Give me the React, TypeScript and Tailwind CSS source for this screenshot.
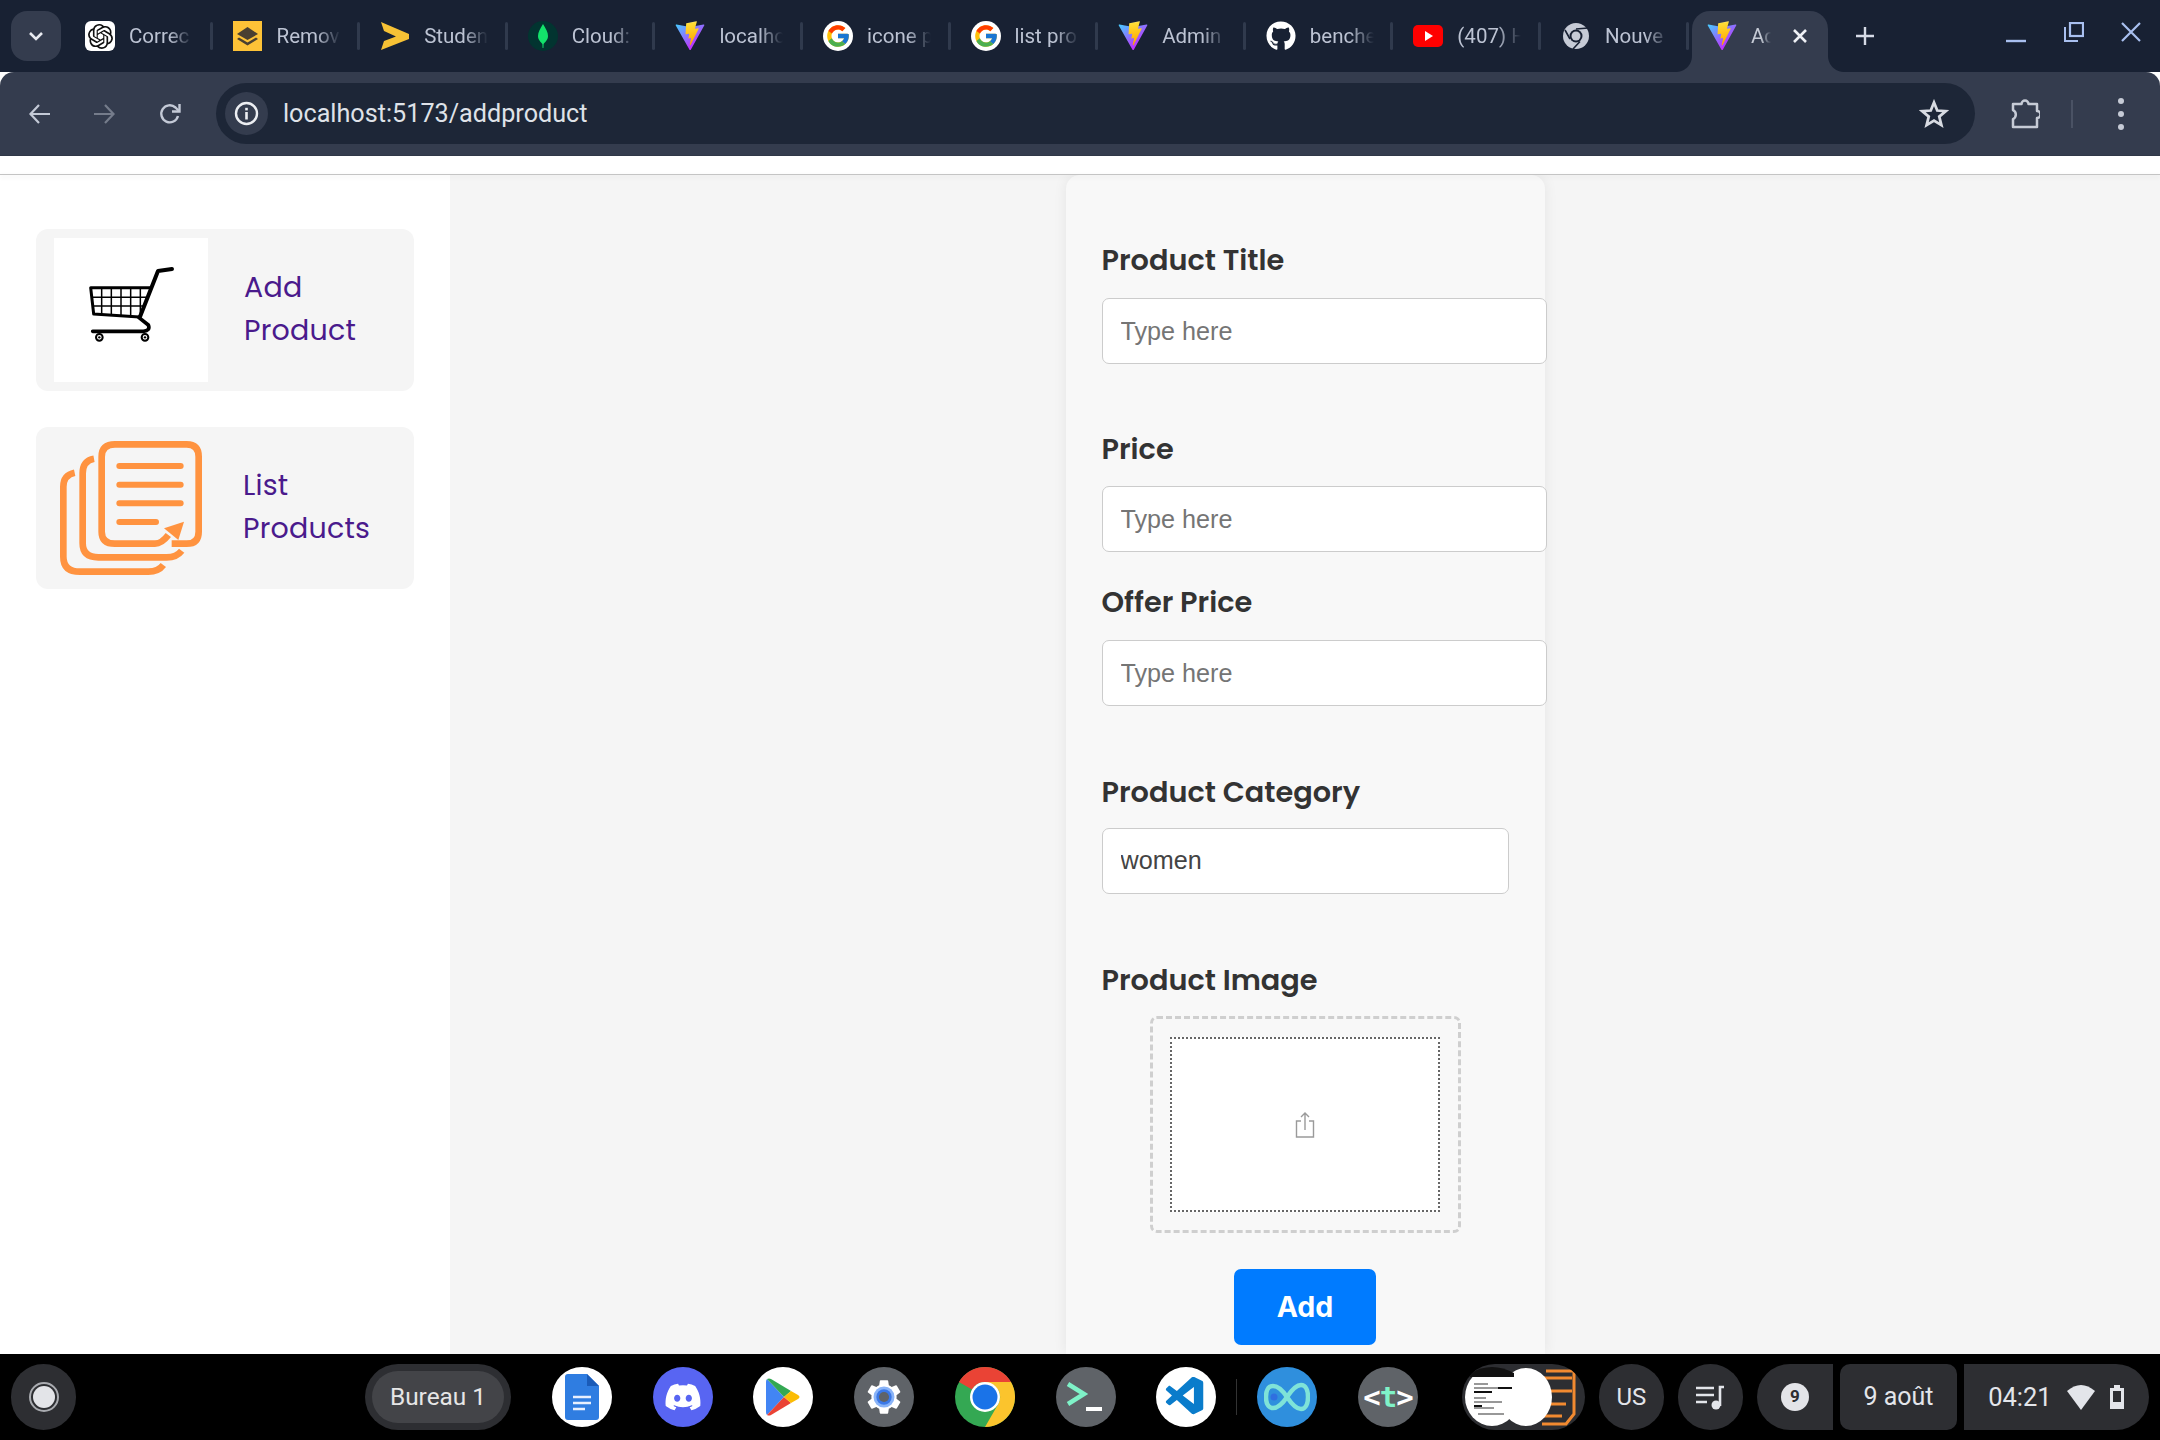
import React from "react";
import { SiOpenai } from "react-icons/si";
import { FaGithub, FaDiscord } from "react-icons/fa";
import { FcGoogle } from "react-icons/fc";
import { VscVscode } from "react-icons/vsc";

const Vite = () => (
  <svg width="30" height="30" viewBox="0 0 410 404">
    <defs>
      <linearGradient id="vt" x1="6" y1="33" x2="235" y2="344" gradientUnits="userSpaceOnUse">
        <stop stopColor="#41d1ff" />
        <stop offset="1" stopColor="#bd34fe" />
      </linearGradient>
      <linearGradient id="vb" x1="194.65" y1="8.8" x2="236.08" y2="292.99" gradientUnits="userSpaceOnUse">
        <stop stopColor="#ffea83" />
        <stop offset="0.083" stopColor="#ffdd35" />
        <stop offset="1" stopColor="#ffa800" />
      </linearGradient>
    </defs>
    <path d="M399.641 59.5246L215.643 388.545C211.844 395.338 202.084 395.378 198.228 388.618L10.5817 59.5563C6.38087 52.1896 12.6802 43.2665 21.0281 44.7586L205.223 77.6824C206.398 77.8924 207.601 77.8904 208.776 77.6763L389.119 44.8058C397.439 43.2894 403.768 52.1434 399.641 59.5246Z" fill="url(#vt)" />
    <path d="M292.965 1.5744L156.801 28.2552C154.563 28.6937 152.906 30.5903 152.771 32.8664L144.395 174.33C144.198 177.662 147.258 180.248 150.51 179.498L188.42 170.749C191.967 169.931 195.172 173.055 194.443 176.622L183.18 231.775C182.422 235.487 185.907 238.661 189.532 237.56L212.947 230.446C216.577 229.344 220.065 232.527 219.297 236.242L201.398 322.875C200.278 328.294 207.486 331.249 210.492 326.603L212.5 323.5L323.454 102.072C325.312 98.3645 322.108 94.137 318.036 94.9228L279.014 102.454C275.347 103.161 272.227 99.746 273.262 96.1583L298.731 7.86689C299.767 4.27314 296.636 0.855181 292.965 1.5744Z" fill="url(#vb)" />
  </svg>
);

const OpenAI = () => (
  <div className="flex h-[30px] w-[30px] items-center justify-center rounded-[6px] bg-white text-[#111]">
    <SiOpenai size={25} />
  </div>
);

const Layers = () => (
  <svg width="29" height="30" viewBox="0 0 29 30">
    <rect width="29" height="30" fill="#fdc237" />
    <path d="M14.5 6 L25 13 L14.5 19 L4 13 Z" fill="#4a4031" />
    <path d="M6 16.5 L14.5 21.5 L23 16.5 L25 18 L14.5 24.5 L4 18 Z" fill="#4a4031" />
  </svg>
);

const Chevron = () => (
  <svg width="30" height="30" viewBox="0 0 30 30">
    <path d="M1 1 L29 13 L29 18 L1 29 L4 20 L16 15.5 L4 10 Z" fill="#f7c235" />
  </svg>
);

const Mongo = () => (
  <div className="flex h-[30px] w-[30px] items-center justify-center rounded-full bg-[#023430]">
    <svg width="12" height="24" viewBox="0 0 12 24">
      <path d="M6 0 C9 5 11 8 11 12 C11 16 8 18 6.6 20 L6.4 24 L5.6 24 L5.4 20 C4 18 1 16 1 12 C1 8 3 5 6 0 Z" fill="#13e26b" />
    </svg>
  </div>
);

const Google = () => (
  <div className="flex h-[30px] w-[30px] items-center justify-center rounded-full bg-white">
    <FcGoogle size={26} />
  </div>
);

const Github = () => <FaGithub size={30} color="#fff" />;

const YouTube = () => (
  <svg width="30" height="22" viewBox="0 0 30 22">
    <rect width="30" height="22" rx="5" fill="#ff0000" />
    <path d="M12 6 L20 11 L12 16 Z" fill="#fff" />
  </svg>
);

const ChromeGrey = () => (
  <svg width="26" height="26" viewBox="0 0 26 26">
    <circle cx="13" cy="13" r="13" fill="#c6cbd6" />
    <circle cx="13" cy="13" r="6.5" fill="#182133" />
    <circle cx="13" cy="13" r="4.5" fill="#c6cbd6" />
    <path d="M13 6 L25 5 M7 16 L2 7 M17 18.5 L10 26" stroke="#182133" strokeWidth="1.6" />
  </svg>
);

const tabs: { icon: React.ReactNode; title: string }[] = [
  { icon: <OpenAI />, title: "Correc" },
  { icon: <Layers />, title: "Remov" },
  { icon: <Chevron />, title: "Studen" },
  { icon: <Mongo />, title: "Cloud:" },
  { icon: <Vite />, title: "localho" },
  { icon: <Google />, title: "icone p" },
  { icon: <Google />, title: "list pro" },
  { icon: <Vite />, title: "Admin" },
  { icon: <Github />, title: "benche" },
  { icon: <YouTube />, title: "(407) H" },
  { icon: <ChromeGrey />, title: "Nouve" },
];

function Tab({ icon, title }: { icon: React.ReactNode; title: string }) {
  return (
    <div className="flex h-[60px] w-[147.6px] shrink-0 items-center">
      <div className="ml-[21px] flex h-[32px] w-[30px] shrink-0 items-center justify-center">{icon}</div>
      <div className="ml-[14px] w-[76px] whitespace-nowrap text-[20.5px] text-[#bcc3d3] [mask-image:linear-gradient(to_right,black_40px,transparent_64px)]">
        {title}
      </div>
      <div className="ml-auto mr-[-1px] h-[28px] w-[3px] rounded-full bg-[#303a4d]" />
    </div>
  );
}

function TabStrip() {
  return (
    <div className="flex h-[72px] shrink-0 items-end bg-[#182133] pl-[11px]">
      <div className="mb-[11px] flex h-[50px] w-[50px] shrink-0 items-center justify-center rounded-[16px] bg-[#343c4e]">
        <svg width="16" height="10" viewBox="0 0 16 10">
          <path d="M2 2 L8 8 L14 2" fill="none" stroke="#e8eaf0" strokeWidth="2.6" />
        </svg>
      </div>
      <div className="flex h-[72px] w-[3px] shrink-0" />
      <div className="flex h-[72px] items-start pt-[6px]">
        {tabs.map((t, i) => (
          <Tab key={i} icon={t.icon} title={t.title} />
        ))}
      </div>
      <div className="relative ml-[4.4px] flex h-[61px] w-[136px] shrink-0 items-center rounded-t-[18px] bg-[#343c4e] pb-[11px]">
        <div className="absolute bottom-0 left-[-16px] h-[16px] w-[16px] bg-[radial-gradient(circle_at_0_0,#182133_15.5px,#343c4e_16.5px)]" />
        <div className="absolute bottom-0 right-[-16px] h-[16px] w-[16px] bg-[radial-gradient(circle_at_100%_0,#182133_15.5px,#343c4e_16.5px)]" />
        <div className="ml-[15px] flex h-[32px] w-[30px] shrink-0 items-center justify-center">
          <Vite />
        </div>
        <div className="ml-[14px] w-[22px] whitespace-nowrap text-[20.5px] text-[#c6cbd6] [mask-image:linear-gradient(to_right,black_10px,transparent_20px)]">
          Ac
        </div>
        <svg className="ml-[20px]" width="14" height="14" viewBox="0 0 14 14">
          <path d="M1 1 L13 13 M13 1 L1 13" stroke="#eef0f5" strokeWidth="2.6" />
        </svg>
      </div>
      <div className="flex h-[72px] flex-1 items-center">
        <svg className="ml-[27px]" width="20" height="20" viewBox="0 0 20 20">
          <path d="M10 1 V19 M1 10 H19" stroke="#d5dae6" strokeWidth="2.4" />
        </svg>
        <div className="ml-auto flex items-center pr-[18px]">
          <svg className="mr-[37px] mt-[10px]" width="22" height="10" viewBox="0 0 22 10">
            <path d="M1 5 H21" stroke="#a9c0f0" strokeWidth="2.4" />
          </svg>
          <svg className="mr-[36px] mb-[9px]" width="20" height="20" viewBox="0 0 20 20">
            <path d="M1 5 V19 H14" fill="none" stroke="#a9c0f0" strokeWidth="2" />
            <rect x="6" y="1" width="13" height="13" fill="none" stroke="#a9c0f0" strokeWidth="2.2" />
          </svg>
          <svg className="mb-[8px]" width="22" height="22" viewBox="0 0 22 22">
            <path d="M2 2 L20 20 M20 2 L2 20" stroke="#a9c0f0" strokeWidth="2.2" />
          </svg>
        </div>
      </div>
    </div>
  );
}

function Toolbar() {
  return (
    <div className="flex h-[84px] shrink-0 items-center rounded-t-[14px] border-b border-[#2f3747] bg-[#343c4e]">
      <svg className="ml-[28px]" width="24" height="24" viewBox="0 0 24 24">
        <path d="M22 12 H3 M11 3 L2.5 12 L11 21" fill="none" stroke="#c3c9d6" strokeWidth="2.2" />
      </svg>
      <svg className="ml-[40px]" width="24" height="24" viewBox="0 0 24 24">
        <path d="M2 12 H21 M13 3 L21.5 12 L13 21" fill="none" stroke="#757c8b" strokeWidth="2.2" />
      </svg>
      <svg className="ml-[42px]" width="24" height="24" viewBox="0 0 24 24">
        <path d="M20 14 A8.5 8.5 0 1 1 17.5 5.5 L21 9" fill="none" stroke="#c3c9d6" strokeWidth="2.4" />
        <path d="M21.5 2 V9.5 H14" fill="none" stroke="#c3c9d6" strokeWidth="2.4" />
      </svg>
      <div className="ml-[34px] flex h-[61px] w-[1759px] shrink-0 items-center rounded-full bg-[#1d2637] pl-[9px]">
        <div className="flex h-[43px] w-[43px] items-center justify-center rounded-full bg-[#343c4e]">
          <svg width="25" height="25" viewBox="0 0 25 25">
            <circle cx="12.5" cy="12.5" r="10.5" fill="none" stroke="#eceef2" strokeWidth="2.4" />
            <rect x="11.2" y="11" width="2.6" height="7.5" fill="#eceef2" />
            <rect x="11.2" y="6.8" width="2.6" height="2.6" fill="#eceef2" />
          </svg>
        </div>
        <span className="ml-[15px] font-['Roboto',sans-serif] text-[25.2px] text-[#dfe2e8]">localhost:5173/addproduct</span>
        <svg className="ml-auto mr-[26px]" width="30" height="30" viewBox="0 0 24 24">
          <path d="M12 2.8 L14.6 9.2 L21.5 9.7 L16.2 14.1 L17.9 20.9 L12 17.2 L6.1 20.9 L7.8 14.1 L2.5 9.7 L9.4 9.2 Z" fill="none" stroke="#d8dbe2" strokeWidth="2.2" />
        </svg>
      </div>
      <svg className="ml-[35px]" width="30" height="32" viewBox="0 0 30 32">
        <path d="M3 6 H11.5 A3.5 3.5 0 0 1 18.5 6 H27 V13 A3.5 3.5 0 0 1 27 20 V29 H3 V21 A5 5 0 0 0 3 12 Z" fill="none" stroke="#c6cbd6" strokeWidth="2.5" strokeLinejoin="round" />
      </svg>
      <div className="ml-[31px] h-[28px] w-[2px] bg-[#4a5264]" />
      <div className="ml-[45px] flex flex-col gap-[7px]">
        <div className="h-[6px] w-[6px] rounded-full bg-[#c6cbd6]" />
        <div className="h-[6px] w-[6px] rounded-full bg-[#c6cbd6]" />
        <div className="h-[6px] w-[6px] rounded-full bg-[#c6cbd6]" />
      </div>
    </div>
  );
}

const Cart = () => (
  <svg width="154" height="144" viewBox="162 114 462 432">
    <g fill="none" stroke="#000" strokeLinejoin="round" strokeLinecap="round">
      <path d="M516 207 L474 213 L420 350" strokeWidth="12" />
      <path d="M450 263 L272 263 L281 342 L418 351" strokeWidth="9" />
      <path d="M305 265 V344 M334 265 V346 M363 265 V348 M392 265 V350 M421 265 V340 M276 292 H440 M279 318 H430" strokeWidth="4.5" />
      <path d="M416 352 L445 375 Q452 392 430 394 L278 394" strokeWidth="11" />
      <circle cx="298" cy="412" r="10" strokeWidth="6" />
      <circle cx="435" cy="412" r="10" strokeWidth="6" />
    </g>
    <circle cx="298" cy="412" r="3.5" fill="#000" />
    <circle cx="435" cy="412" r="3.5" fill="#000" />
  </svg>
);

const ListIcon = () => (
  <svg width="154" height="144" viewBox="162 708 462 432">
    <g fill="none" stroke="#ff9340" strokeLinecap="butt" strokeWidth="20">
      <path d="M515 1031 L560 1031 Q596 1031 596 995 L596 770 Q596 733 560 733 L345 733 Q305 733 305 770 L305 995 Q305 1031 345 1031 L465 1031 Q485 1031 505 1005" />
      <path d="M282 776 Q248 782 248 820 L248 1030 Q248 1072 295 1072 L500 1072 Q530 1072 545 1052" />
      <path d="M224 818 Q190 825 190 860 L190 1070 Q190 1115 240 1115 L445 1115 Q475 1115 490 1095" />
    </g>
    <g stroke="#ff9340" strokeLinecap="round" strokeWidth="18">
      <path d="M358 798 H542 M358 854 H542 M358 910 H542 M358 966 H468" />
    </g>
    <path d="M552 965 L535 1020 L492 985 Z" fill="#ff9340" />
  </svg>
);

function SideItem({ icon, first, second, ml }: { icon: React.ReactNode; first: string; second: string; ml: string }) {
  return (
    <div className="flex h-[162px] w-[378px] items-center rounded-[12px] bg-[#f5f5f5] pl-[18px]">
      <div className="shrink-0">{icon}</div>
      <div className={`${ml} pb-[2px] font-['Poppins','Inter',sans-serif] text-[28.5px] leading-[43px] tracking-[0.2px] text-[#4a1a8c]`}>
        <div>{first}</div>
        <div>{second}</div>
      </div>
    </div>
  );
}

function Sidebar() {
  return (
    <div className="flex h-full w-[450px] shrink-0 flex-col gap-[36px] bg-white pl-[36px] pt-[54px]">
      <SideItem icon={<div className="bg-white"><Cart /></div>} first="Add" second="Product" ml="ml-[36px]" />
      <SideItem icon={<ListIcon />} first="List" second="Products" ml="ml-[35px]" />
    </div>
  );
}

const labelCls = "block font-['Poppins','Inter',sans-serif] text-[28.75px] font-semibold leading-[40px] text-[#333]";
const inputCls =
  "block h-[66px] rounded-[7px] border border-[#ccc] bg-white pl-[18px] font-['Liberation_Sans',sans-serif] text-[25.2px] text-[#444] outline-none placeholder:text-[#757575]";

function Field({ label, top, gap }: { label: string; top: string; gap: string }) {
  return (
    <div className={top}>
      <label className={labelCls}>{label}</label>
      <input className={`${inputCls} ${gap} w-[445px]`} placeholder="Type here" />
    </div>
  );
}

function FormCard() {
  return (
    <div className="h-full w-[479px] rounded-t-[14px] bg-[#f8f8f8] px-[36px] pt-[65px] shadow-[0_0_14px_rgba(0,0,0,0.07)]">
      <Field label="Product Title" top="" gap="mt-[18px]" />
      <Field label="Price" top="mt-[65px]" gap="mt-[17px]" />
      <Field label="Offer Price" top="mt-[30px]" gap="mt-[18px]" />
      <div className="mt-[66px]">
        <label className={labelCls}>Product Category</label>
        <select className={`${inputCls} mt-[16px] w-[407px] appearance-none`} defaultValue="women">
          <option value="women">women</option>
          <option value="men">men</option>
          <option value="kids">kids</option>
        </select>
      </div>
      <div className="mt-[66px]">
        <label className={labelCls}>Product Image</label>
        <div className="mx-auto mt-[16px] flex h-[217px] w-[311px] items-center justify-center rounded-[7px] border-[3px] border-dashed border-[#cfcfcf]">
          <div className="flex h-[175px] w-[270px] items-center justify-center border-2 border-dotted border-[#666] bg-white">
            <svg width="20" height="26" viewBox="0 0 20 26">
              <path d="M6 9 H1.5 V25 H18.5 V9 H14 M10 18 V1.5 M6 5 L10 1 L14 5" fill="none" stroke="#9a9a9a" strokeWidth="1.4" />
            </svg>
          </div>
        </div>
        <button className="mx-auto mt-[36px] block h-[76px] w-[142px] rounded-[7px] bg-[#007bff] font-['Inter',sans-serif] text-[28.5px] font-bold text-white">
          Add
        </button>
      </div>
    </div>
  );
}

function DockIcon({ children, mark }: { children: React.ReactNode; mark?: "small" | "wide" }) {
  return (
    <div className="relative flex h-[60px] w-[100.75px] shrink-0 items-center justify-center">
      {children}
      {mark === "small" && <div className="absolute bottom-[-20px] h-[2px] w-[12px] bg-[#c3cfe2]" />}
      {mark === "wide" && <div className="absolute bottom-[-20px] h-[2px] w-[24px] bg-[#e3e8f2]" />}
    </div>
  );
}

const Circle = ({ bg, children }: { bg: string; children: React.ReactNode }) => (
  <div className={`flex h-[60px] w-[60px] items-center justify-center rounded-full ${bg}`}>{children}</div>
);

const ChromeLogo = () => (
  <svg width="60" height="60" viewBox="0 0 60 60">
    <circle cx="30" cy="30" r="30" fill="#34a853" />
    <path d="M30 0 A30 30 0 0 1 56 15 L30 15 A15 15 0 0 0 17 22.5 L4 15 A30 30 0 0 1 30 0 Z" fill="#ea4335" />
    <path d="M56 15 A30 30 0 0 1 30 60 L43 37.5 A15 15 0 0 0 43 22.5 L30 15 Z" fill="#fbc42d" />
    <circle cx="30" cy="30" r="15" fill="#fff" />
    <circle cx="30" cy="30" r="12.5" fill="#1a73e8" />
  </svg>
);

const PlayLogo = () => (
  <svg width="34" height="38" viewBox="0 0 34 38">
    <path d="M1 1 L18 19 L1 37 Q0 36 0 34 V4 Q0 2 1 1 Z" fill="#4285f4" />
    <path d="M1 1 Q3 0 5 1 L25 13 L18 19 Z" fill="#34a853" />
    <path d="M1 37 Q3 38 5 37 L25 25 L18 19 Z" fill="#ea4335" />
    <path d="M25 13 L32 17 Q35 19 32 21 L25 25 L18 19 Z" fill="#fbbc04" />
  </svg>
);

const DocsLogo = () => (
  <svg width="34" height="46" viewBox="0 0 34 46">
    <path d="M3 0 H22 L34 12 V43 Q34 46 31 46 H3 Q0 46 0 43 V3 Q0 0 3 0 Z" fill="#2f7de1" />
    <path d="M22 0 L34 12 H22 Z" fill="#1a5bb8" />
    <path d="M8 23 H26 M8 29 H26 M8 35 H20" stroke="#e8f0fe" strokeWidth="2.4" />
  </svg>
);

const SettingsLogo = () => (
  <svg width="42" height="42" viewBox="0 0 24 24">
    <path fill="#fff" d="M19.14 12.94c.04-.3.06-.61.06-.94 0-.32-.02-.64-.07-.94l2.03-1.58a.49.49 0 0 0 .12-.61l-1.92-3.32a.49.49 0 0 0-.59-.22l-2.39.96c-.5-.38-1.03-.7-1.62-.94l-.36-2.54a.48.48 0 0 0-.48-.41h-3.84a.48.48 0 0 0-.47.41l-.36 2.54c-.59.24-1.13.57-1.62.94l-2.39-.96a.48.48 0 0 0-.59.22L2.74 8.87a.48.48 0 0 0 .12.61l2.03 1.58c-.05.3-.09.63-.09.94s.02.64.07.94l-2.03 1.58a.49.49 0 0 0-.12.61l1.92 3.32c.12.22.37.29.59.22l2.39-.96c.5.38 1.03.7 1.62.94l.36 2.54c.05.24.24.41.48.41h3.84c.24 0 .44-.17.47-.41l.36-2.54c.59-.24 1.13-.56 1.62-.94l2.39.96c.22.08.47 0 .59-.22l1.92-3.32a.48.48 0 0 0-.12-.61z" />
    <circle cx="12" cy="12" r="6" fill="#8ab4f8" />
    <circle cx="12" cy="12" r="4.4" fill="#3b78e7" />
    <circle cx="12" cy="12" r="2.9" fill="#5f6368" />
  </svg>
);

const InfinityLogo = () => (
  <svg width="46" height="30" viewBox="0 0 46 30">
    <path d="M23 15 C17 6 13 4 9 4 C4 4 2 9 2 15 C2 21 4 26 9 26 C13 26 17 24 23 15 C29 6 33 3 37 3 C42 3 44 9 44 15 C44 21 42 27 37 27 C33 27 29 24 23 15 Z" fill="none" stroke="#7fe3d8" strokeWidth="4.5" />
    <circle cx="10" cy="15" r="3.5" fill="#2f6fe0" />
  </svg>
);

const Thumb = () => (
  <div className="relative h-[66px] w-[123px] shrink-0 overflow-hidden rounded-full bg-[#2d2e32]">
    <svg width="123" height="66" viewBox="0 0 123 66">
      <g fill="none" stroke="#f28a30" strokeWidth="3">
        <path d="M78 14 H110 M78 27 H110 M78 40 H104 M78 52 H100" />
        <path d="M84 7 H112 V50 L104 60 H80" />
      </g>
      <ellipse cx="64" cy="33" rx="26" ry="29" fill="#fff" />
      <ellipse cx="30" cy="33" rx="27" ry="29" fill="#fff" />
      <path d="M8 9 Q30 -3 52 9 L52 13 H8 Z" fill="#111" />
      <path d="M12 20 H26 M12 24 H40 M12 34 H24 M12 38 H40 M12 44 H32 M16 50 H42" stroke="#333" strokeWidth="1.2" />
      <path d="M12 28 H30 M36 24 H50 M12 42 H20" stroke="#111" strokeWidth="2.2" />
    </svg>
  </div>
);

function Taskbar() {
  const pill = "flex h-[66px] shrink-0 items-center justify-center bg-[#2d2e32] text-[#e3e5ea]";
  return (
    <div className="flex h-[86px] shrink-0 items-center bg-black pl-[11px] font-['Roboto',sans-serif]">
      <div className={`${pill} w-[65px] rounded-full`}>
        <div className="flex h-[30px] w-[30px] items-center justify-center rounded-full border-2 border-[#a9abb0]">
          <div className="h-[22px] w-[22px] rounded-full bg-[#e3e4e8]" />
        </div>
      </div>
      <div className={`${pill} ml-[289px] w-[146px] rounded-full`}>
        <div className="flex h-[52px] w-[132px] items-center justify-center rounded-full bg-[#434448] text-[24.4px] text-[#e6e6e6]">Bureau 1</div>
      </div>
      <div className="ml-[20.6px] flex items-center">
        <DockIcon><Circle bg="bg-white"><DocsLogo /></Circle></DockIcon>
        <DockIcon><Circle bg="bg-[#5865f2]"><FaDiscord size={38} color="#fff" /></Circle></DockIcon>
        <DockIcon><Circle bg="bg-white"><PlayLogo /></Circle></DockIcon>
        <DockIcon mark="small"><Circle bg="bg-[#5f6368]"><SettingsLogo /></Circle></DockIcon>
        <DockIcon mark="wide"><ChromeLogo /></DockIcon>
        <DockIcon mark="small">
          <Circle bg="bg-[#5f6368]">
            <svg width="40" height="32" viewBox="0 0 40 32">
              <path d="M2 3 L18 13 L2 23" fill="none" stroke="#7ff2c8" strokeWidth="4.5" />
              <path d="M20 28 H36" stroke="#fff" strokeWidth="4" />
            </svg>
          </Circle>
        </DockIcon>
        <DockIcon mark="small"><Circle bg="bg-white"><VscVscode size={46} color="#0a7ccb" /></Circle></DockIcon>
        <div className="-ml-px h-[36px] w-px bg-[#333]" />
        <DockIcon mark="small"><Circle bg="bg-[#2f8fdd]"><InfinityLogo /></Circle></DockIcon>
        <DockIcon mark="small">
          <Circle bg="bg-[#5f6368]">
            <span className="font-['DejaVu_Sans_Mono',monospace] text-[29px] font-bold leading-none tracking-[-1px] text-white">
              &lt;<span className="text-[#7ff2c8]">t</span>&gt;
            </span>
          </Circle>
        </DockIcon>
      </div>
      <div className="ml-[23.6px] flex items-center">
        <Thumb />
        <div className={`${pill} ml-[14px] w-[65px] rounded-full text-[24px]`}>US</div>
        <div className={`${pill} ml-[14px] w-[65px] rounded-full`}>
          <svg width="30" height="26" viewBox="0 0 30 26">
            <path d="M1 4 H19 M1 11 H19 M1 18 H12" stroke="#e3e5ea" strokeWidth="2.6" />
            <path d="M25 22 V3 H29" fill="none" stroke="#e3e5ea" strokeWidth="2.6" />
            <circle cx="21" cy="21" r="4.5" fill="#e3e5ea" />
          </svg>
        </div>
        <div className={`${pill} ml-[14px] w-[76px] rounded-l-full rounded-r-[10px]`}>
          <div className="flex h-[28px] w-[28px] items-center justify-center rounded-full bg-[#e3e4e8] text-[17px] font-bold text-[#2d2e32]">9</div>
        </div>
        <div className={`${pill} ml-[7px] w-[117px] rounded-[10px] text-[25px]`}>9 août</div>
        <div className={`${pill} ml-[7px] w-[185px] rounded-l-[10px] rounded-r-full text-[25.5px]`}>
          <span>04:21</span>
          <svg className="ml-[15px]" width="28" height="26" viewBox="0 0 28 26">
            <path d="M0 7 Q14 -5 28 7 L14 26 Z" fill="#e3e5ea" />
          </svg>
          <svg className="ml-[14px]" width="16" height="26" viewBox="0 0 16 26">
            <path d="M5 1 H11 V4 H15 V25 H1 V4 H5 Z" fill="#e3e5ea" />
            <rect x="4" y="7" width="8" height="11" fill="#2d2e32" />
          </svg>
        </div>
      </div>
    </div>
  );
}

export default function App() {
  return (
    <div className="flex h-[1440px] w-[2160px] flex-col overflow-hidden bg-white font-['Roboto',sans-serif]">
      <TabStrip />
      <Toolbar />
      <div className="h-[18px] shrink-0 bg-white" />
      <div className="z-10 h-px shrink-0 bg-[#c4c4c4] shadow-[0_2px_5px_rgba(0,0,0,0.12)]" />
      <div className="flex min-h-0 flex-1 overflow-hidden">
        <Sidebar />
        <div className="flex h-full flex-1 justify-center bg-[#f5f5f5]">
          <FormCard />
        </div>
      </div>
      <Taskbar />
    </div>
  );
}
